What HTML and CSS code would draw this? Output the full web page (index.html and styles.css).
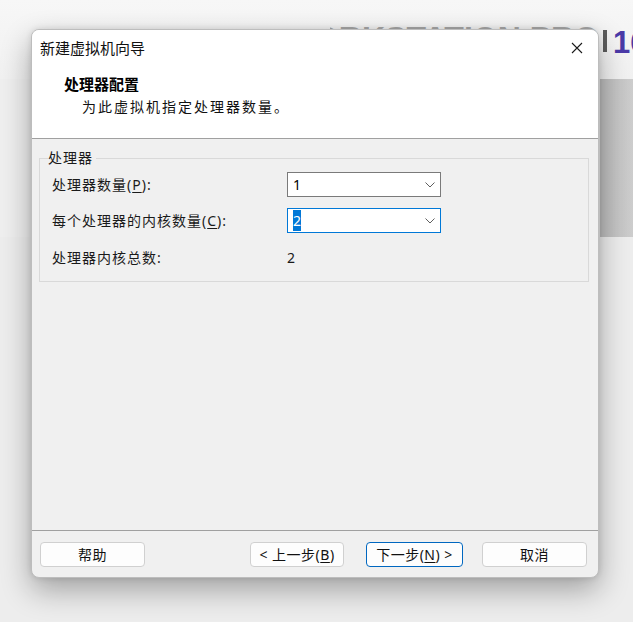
FILE: index.html
```html
<!DOCTYPE html>
<html lang="zh-CN">
<head>
<meta charset="utf-8">
<title>新建虚拟机向导</title>
<link rel="stylesheet" href="styles.css">
</head>
<body>
<div class="backdrop">
  <div class="top-strip">
    <div class="brand-text"><span>VMWARE WORKSTATION PRO</span></div>
    <span class="brand-bar"></span>
    <span class="brand-num">16</span>
  </div>
  <div class="panel-row"><div class="panel"></div></div>
  <div class="rest"></div>
</div>

<div class="dialog">
  <div class="header">
    <div class="titlebar">
      <span class="title">新建虚拟机向导</span>
      <svg class="close" width="12" height="12" viewBox="0 0 12 12"><path d="M1 1 L11 11 M11 1 L1 11" stroke="#1b1b1b" stroke-width="1.1" fill="none"/></svg>
    </div>
    <div class="heading">处理器配置</div>
    <div class="subtitle">为此虚拟机指定处理器数量。</div>
  </div>
  <div class="body">
    <fieldset class="group">
      <legend class="legend">处理器</legend>
      <div class="grid">
        <div class="label">处理器数量(<u>P</u>):</div>
        <div class="combo">
          <span class="combo-value">1</span>
          <svg class="chev" width="10" height="6" viewBox="0 0 10 6"><path d="M0.5 0.5 L5 5 L9.5 0.5" stroke="#5f5f5f" stroke-width="1" fill="none"/></svg>
        </div>
        <div class="label">每个处理器的内核数量(<u>C</u>):</div>
        <div class="combo focus">
          <span class="combo-value"><span class="sel">2</span></span>
          <svg class="chev" width="10" height="6" viewBox="0 0 10 6"><path d="M0.5 0.5 L5 5 L9.5 0.5" stroke="#5f5f5f" stroke-width="1" fill="none"/></svg>
        </div>
        <div class="label last">处理器内核总数:</div>
        <div class="value last">2</div>
      </div>
    </fieldset>
  </div>
  <div class="footer">
    <button class="btn help">帮助</button>
    <button class="btn prev">&lt; 上一步(<u>B</u>)</button>
    <button class="btn next">下一步(<u>N</u>) &gt;</button>
    <button class="btn cancel">取消</button>
  </div>
</div>
</body>
</html>
```

FILE: styles.css
```css
* { box-sizing: border-box; }
html, body {
  margin: 0;
  padding: 0;
  width: 633px;
  height: 622px;
  overflow: hidden;
}
body {
  background: #f4f4f4;
  font-family: "Noto Sans", "Noto Sans CJK SC", sans-serif;
  font-size: 14px;
  color: #1a1a1a;
  position: relative;
}

/* backdrop page */
.backdrop {
  display: flex;
  flex-direction: column;
  height: 622px;
}
.top-strip {
  height: 79px;
  display: flex;
  align-items: flex-start;
  padding-left: 330px;
  padding-top: 17px;
  white-space: nowrap;
  background: linear-gradient(#f7f7f7, #f1f1f1);
}
.brand-text {
  flex: none;
  width: 269px;
  overflow: hidden;
  display: flex;
  justify-content: flex-end;
  margin-top: 1px;
  font-family: "Liberation Sans", sans-serif;
  font-weight: bold;
  font-size: 32px;
  line-height: 40px;
  color: #a8a8a8;
}
.brand-text span { flex: none; }
.brand-bar {
  flex: none;
  width: 4px;
  height: 22px;
  margin-top: 13px;
  margin-left: 4px;
  background: #5c5c5c;
}
.brand-num {
  flex: none;
  margin-left: 6px;
  margin-top: 6px;
  font-family: "Liberation Sans", sans-serif;
  font-weight: bold;
  font-size: 31px;
  line-height: 40px;
  color: #4b3aa8;
}
.panel-row {
  height: 158px;
  padding-left: 600px;
  background: #efefef;
}
.panel {
  height: 100%;
  background: linear-gradient(to right, #bcbcbc, #cdcdcd);
}
.rest {
  flex: 1;
  background: #ededed;
}

/* dialog overlay */
.dialog {
  position: absolute;
  left: 31px;
  top: 29px;
  width: 568px;
  height: 549px;
  border: 1px solid #bdbdbd;
  border-radius: 8px;
  overflow: hidden;
  display: flex;
  flex-direction: column;
  background: #f0f0f0;
  box-shadow: 0 12px 30px rgba(0, 0, 0, 0.32), 0 0 6px rgba(0, 0, 0, 0.12);
  font-family: "Noto Sans", "Noto Sans CJK SC", sans-serif;
  font-size: 14px;
}
.header {
  height: 109px;
  background: #ffffff;
  border-bottom: 1px solid #a0a0a0;
  flex: none;
}
.titlebar {
  height: 35px;
  display: flex;
  align-items: center;
  justify-content: space-between;
  padding-left: 8px;
  padding-right: 15px;
}
.title {
  font-size: 15px;
  line-height: 20px;
  color: #111;
}
.close { display: block; }
.heading {
  margin-top: 9px;
  padding-left: 32px;
  font-weight: bold;
  font-size: 15px;
  line-height: 20px;
  color: #000;
}
.subtitle {
  margin-top: 3px;
  padding-left: 50px;
  font-size: 14px;
  letter-spacing: 2px;
  line-height: 20px;
  color: #111;
}

.body {
  flex: 1;
  padding: 9px 9px 0 7px;
}
.group {
  margin: 0;
  padding: 4px 12px 12px 12px;
  border: 1px solid #d9d9d9;
  min-width: 0;
}
.legend {
  padding: 0 3px 0 0;
  margin-left: -4px;
  font-size: 14px;
  letter-spacing: 1px;
  line-height: 20px;
  color: #1a1a1a;
}
.grid {
  display: grid;
  grid-template-columns: 235px 154px;
  grid-auto-rows: 25px;
  row-gap: 11px;
  align-items: center;
}
.label {
  font-size: 14px;
  letter-spacing: 1px;
  line-height: 20px;
  color: #1a1a1a;
  white-space: nowrap;
}
.last { margin-top: 3px; }
.value {
  font-size: 14px;
  line-height: 20px;
}
u { text-underline-offset: 2px; }
.combo {
  height: 25px;
  border: 1px solid #7a7a7a;
  background: #fff;
  display: flex;
  align-items: center;
  justify-content: space-between;
  padding-left: 5px;
  padding-right: 5px;
}
.combo.focus { border-color: #0078d7; }
.combo-value {
  font-size: 14px;
  line-height: 20px;
  color: #000;
}
.sel {
  background: #0078d7;
  color: #fff;
  padding: 1px 0;
}
.chev { display: block; }

.footer {
  height: 47px;
  flex: none;
  border-top: 1px solid #a0a0a0;
  display: flex;
  align-items: flex-start;
  padding: 11px 11px 0 8px;
}
.btn {
  height: 25px;
  border: 1px solid #d0d0d0;
  border-radius: 4px;
  background: #fdfdfd;
  font-family: "Noto Sans", "Noto Sans CJK SC", sans-serif;
  font-size: 14px;
  letter-spacing: 0.5px;
  color: #111;
  padding: 0;
  line-height: 20px;
}
.help { width: 105px; }
.prev { width: 94px; margin-left: auto; }
.next { width: 97px; margin-left: 22px; border-color: #0067c0; }
.cancel { width: 105px; margin-left: 19px; }
```
